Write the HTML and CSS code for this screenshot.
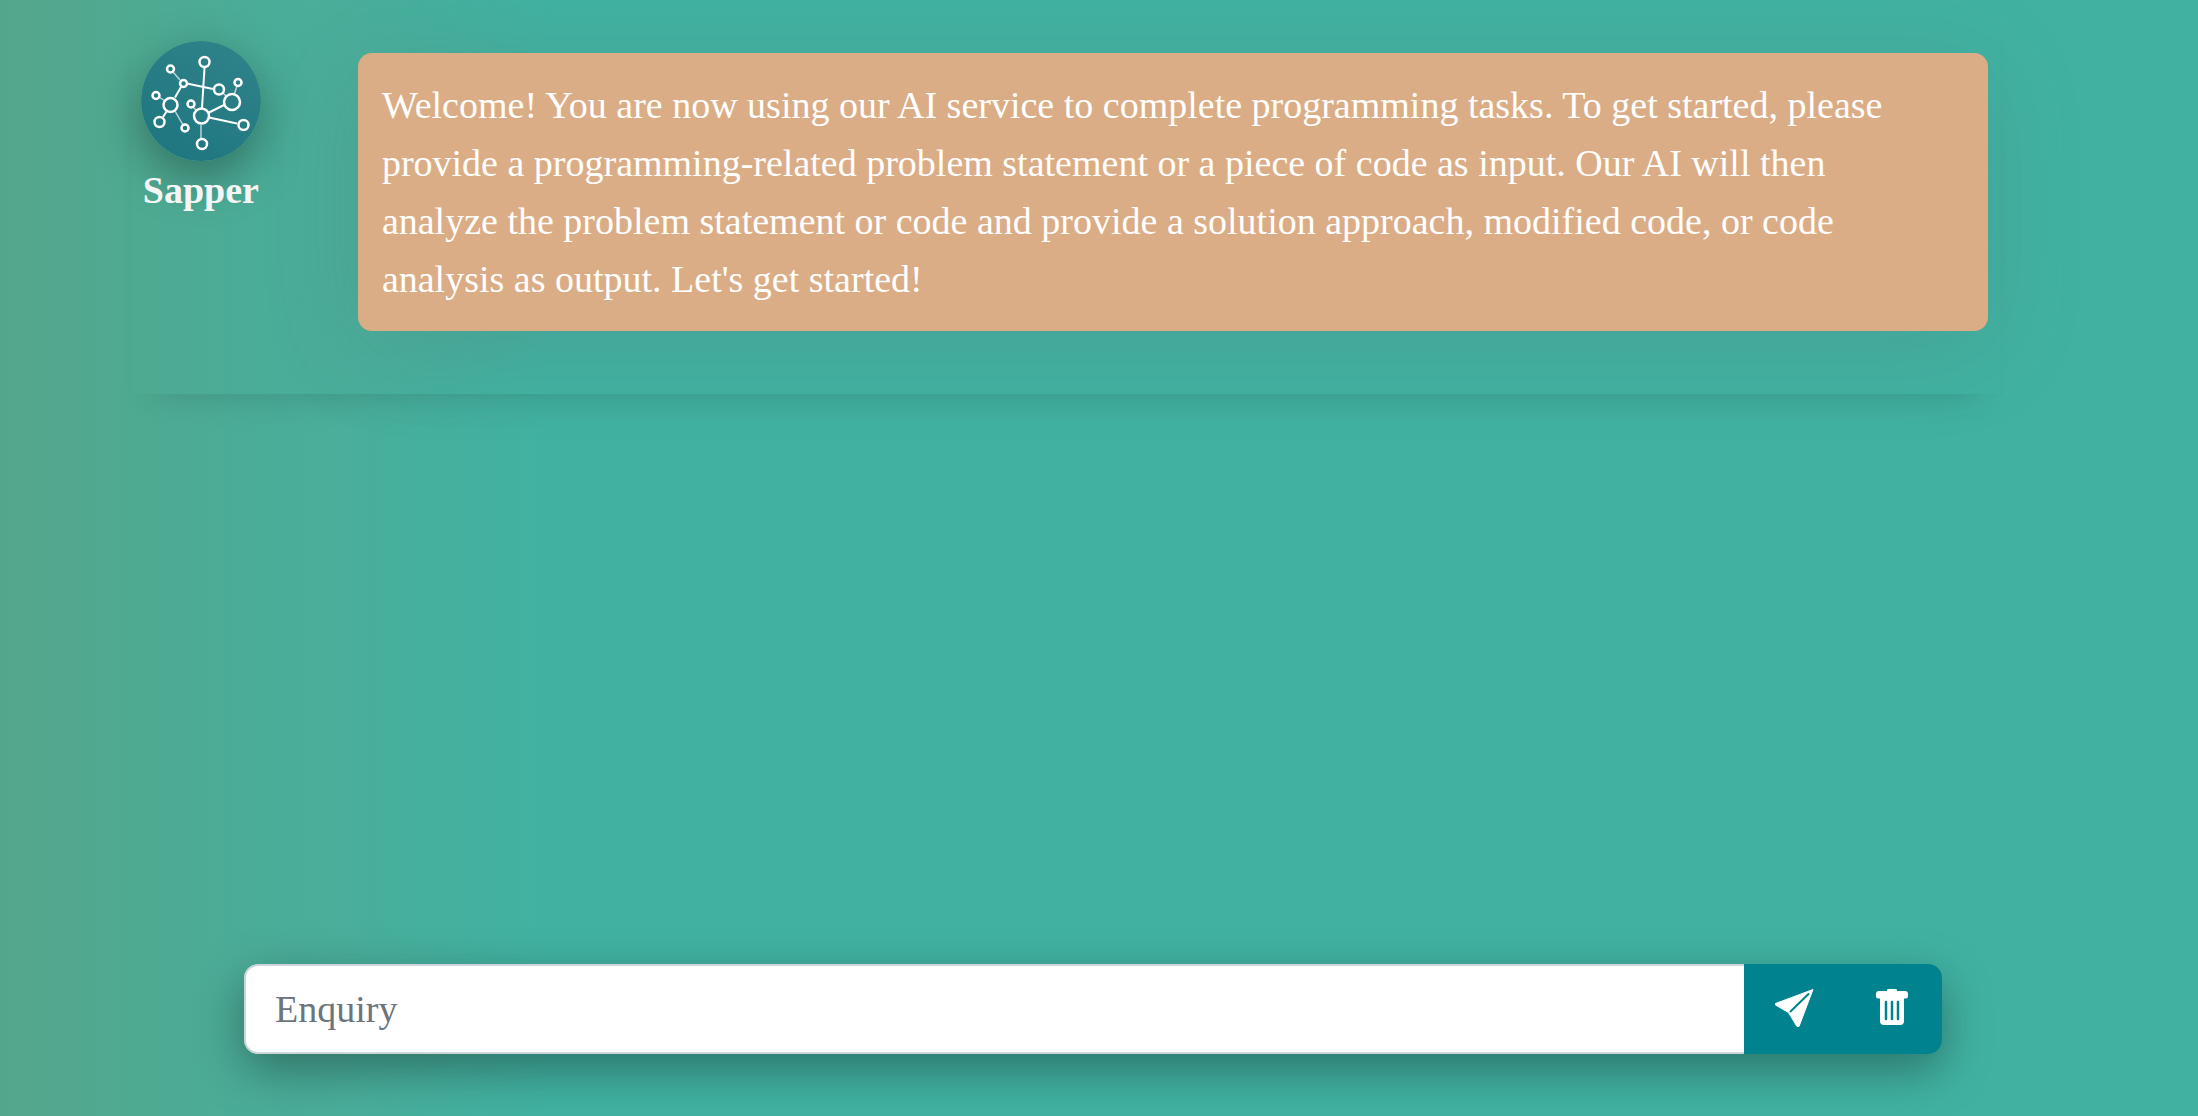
FILE: index.html
```
<!DOCTYPE html>
<html lang="en">
<head>
<meta charset="utf-8">
<meta name="viewport" content="width=device-width, initial-scale=1">
<title>Sapper</title>
<link rel="stylesheet" href="styles.css">
</head>
<body>
<main class="chat">
  <article class="message">
    <div class="author">
      <svg class="avatar" viewBox="0 0 120 120" aria-hidden="true">
        <defs>
          <linearGradient id="disc" x1="0.2" y1="1" x2="0.8" y2="0">
            <stop offset="0" stop-color="#1f7680"/>
            <stop offset="1" stop-color="#2f8289"/>
          </linearGradient>
        </defs>
        <circle cx="60" cy="60" r="60" fill="url(#disc)"/>
        <g fill="none" stroke="#fff" stroke-width="2">
          <path d="M63.500 27L61 67M46 42.500L72 48M40 46L34 56.500M68 71.500L83 64M68 76.500L96 82.500M25.500 70.500L22 76"/>
        </g>
        <g fill="none" stroke="#b9d6d8" stroke-width="1.500">
          <path d="M32 31L39 39M18 56L24 60M34 70L42 84M52 66L56 70M60 84V97M82 52L85 55M96 45L93 54"/>
        </g>
        <g fill="none" stroke="#fff" stroke-width="2.500">
          <circle cx="63.500" cy="21" r="5"/>
          <circle cx="29.500" cy="28" r="3.500"/>
          <circle cx="42.500" cy="42.500" r="3.500"/>
          <circle cx="15" cy="54.500" r="3.500"/>
          <circle cx="29.500" cy="64" r="7"/>
          <circle cx="18.500" cy="81" r="5"/>
          <circle cx="44" cy="87" r="3.500"/>
          <circle cx="50" cy="63" r="3.500"/>
          <circle cx="60.500" cy="75" r="7.500"/>
          <circle cx="61" cy="103" r="5"/>
          <circle cx="78" cy="48.500" r="5"/>
          <circle cx="91" cy="61" r="8"/>
          <circle cx="97" cy="41.500" r="3.500"/>
          <circle cx="102.500" cy="84" r="5"/>
        </g>
      </svg>
      <strong class="name">Sapper</strong>
    </div>
    <p class="bubble">Welcome! You are now using our AI service to complete programming tasks. To get started, please provide a programming-related problem statement or a piece of code as input. Our AI will then analyze the problem statement or code and provide a solution approach, modified code, or code analysis as output. Let's get started!</p>
  </article>
</main>
<form class="composer">
  <input class="enquiry" type="text" placeholder="Enquiry" aria-label="Enquiry">
  <button class="action" type="button" aria-label="Send">
    <svg class="icon" viewBox="0 0 40 40" aria-hidden="true">
      <path fill="#fff" stroke="#fff" stroke-linejoin="round" d="M39 0.500L1.500 14.500V16L14.500 23.500L23 37.500H25Z"/>
      <path fill="none" stroke="#00838f" stroke-width="2" stroke-linecap="round" d="M16.500 22.500L34.500 5"/>
    </svg>
  </button>
  <button class="action" type="button" aria-label="Clear">
    <svg class="icon" viewBox="0 0 40 40" aria-hidden="true">
      <path fill="#fff" d="M14 1Q14 0 16 0H22Q24 0 24 1V2H32Q35 2 35 5V7Q35 9.500 33 9.500H31V32Q31 36 27 36H11Q7 36 7 32V9.500H5Q3 9.500 3 7V5Q3 2 6 2H14Z"/>
      <path fill="none" stroke="#00838f" stroke-width="2.500" stroke-linecap="round" d="M13 13V30M19 13V30M25 13V30"/>
    </svg>
  </button>
</form>
</body>
</html>
```
FILE: styles.css
```
* {
  box-sizing: border-box;
}

body {
  display: flex;
  flex-direction: column;
  min-height: 100vh;
  margin: 0;
  font-family: "Liberation Serif", "Times New Roman", serif;
  font-size: 38px;
  line-height: 58px;
  background: linear-gradient(90deg, #54a68b 0, #4aad98 12%, #49ae9b 16%, #41b2a2 25%);
}

.chat {
  flex: 1;
  padding: 0 9% 0 6%;
}

.message {
  display: flex;
  align-items: flex-start;
  padding: 41px 12px 63px 9px;
  box-shadow: 0 24px 32px -24px rgba(0, 0, 0, 0.16);
}

.author {
  display: flex;
  flex-direction: column;
  align-items: center;
  width: 217px;
  flex: none;
  padding-right: 97px;
}

.avatar {
  width: 120px;
  height: 120px;
  border-radius: 50%;
  box-shadow: 0 16px 48px rgba(0, 0, 0, 0.35);
}

.name {
  color: #f5f5f5;
}

.bubble {
  flex: 1;
  margin: 12px 0 0;
  padding: 23px 44px 23px 24px;
  border-radius: 14px;
  color: #fff;
  background: #dbad86;
  box-shadow: 0 16px 96px rgba(94, 94, 94, 0.2);
}

.composer {
  display: flex;
  height: 90px;
  margin: 0 256px 62px 244px;
  border-radius: 14px;
  box-shadow: 0 16px 48px rgba(0, 0, 0, 0.35);
}

.enquiry {
  flex: 1;
  min-width: 0;
  padding: 0 29px;
  border: 2px solid #ced4da;
  border-right: 0;
  border-radius: 14px 0 0 14px;
  font: inherit;
  background: #fff;
}

.enquiry::placeholder {
  color: #6c757d;
}

.action {
  display: flex;
  align-items: center;
  justify-content: center;
  width: 99px;
  padding: 0;
  border: 0;
  background: #00838f;
}

.action:last-child {
  border-radius: 0 14px 14px 0;
}

.icon {
  width: 40px;
  height: 40px;
}
```
